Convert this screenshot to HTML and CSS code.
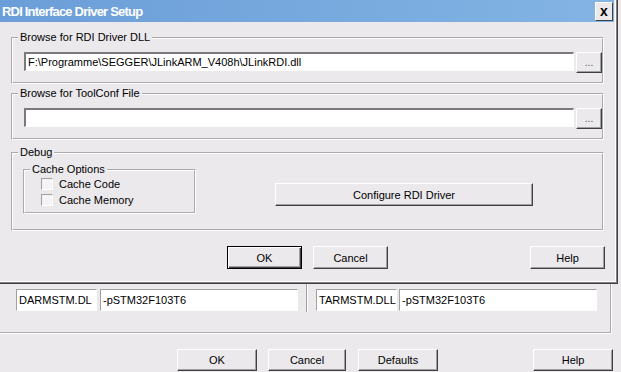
FILE: index.html
```html
<!DOCTYPE html>
<html lang="en">
<head>
    <meta charset="UTF-8">
    <title>RDI Interface Driver Setup</title>
    <link rel="stylesheet" href="styles.css">
</head>
<body>

    <div class="dialog">
        <div class="titlebar">
            <span class="title">RDI Interface Driver Setup</span>
            <span class="close">x</span>
        </div>

        <div class="dialog-body">
            <fieldset class="group group-dll">
                <legend>Browse for RDI Driver DLL</legend>
                <div class="browse-row">
                    <div class="field wide">F:\Programme\SEGGER\JLinkARM_V408h\JLinkRDI.dll</div>
                    <button class="btn browse">...</button>
                </div>
            </fieldset>

            <fieldset class="group group-conf">
                <legend>Browse for ToolConf File</legend>
                <div class="browse-row">
                    <div class="field wide"></div>
                    <button class="btn browse">...</button>
                </div>
            </fieldset>

            <fieldset class="group group-debug">
                <legend>Debug</legend>
                <div class="debug-row">
                    <fieldset class="group cache">
                        <legend>Cache Options</legend>
                        <div class="checks">
                            <label class="check"><span class="box"></span>Cache Code</label>
                            <label class="check"><span class="box"></span>Cache Memory</label>
                        </div>
                    </fieldset>
                    <button class="btn configure">Configure RDI Driver</button>
                </div>
            </fieldset>

            <div class="button-row">
                <button class="btn default">OK</button>
                <button class="btn">Cancel</button>
                <span class="spacer"></span>
                <button class="btn">Help</button>
            </div>
        </div>
    </div>

    <div class="under">
        <div class="under-frame">
            <div class="pair">
                <div class="field small">DARMSTM.DL</div>
                <div class="field long">-pSTM32F103T6</div>
            </div>
            <span class="divider"></span>
            <div class="pair right">
                <div class="field small">TARMSTM.DLL</div>
                <div class="field long">-pSTM32F103T6</div>
            </div>
        </div>
        <div class="under-buttons">
            <button class="btn ok2">OK</button>
            <button class="btn cancel2">Cancel</button>
            <button class="btn defaults">Defaults</button>
            <span class="spacer"></span>
            <button class="btn help2">Help</button>
        </div>
    </div>

</body>
</html>
```

FILE: styles.css
```css
body {
    margin: 0;
    width: 621px;
    height: 372px;
    overflow: hidden;
    background: #ece9ec;
    font-family: "Liberation Sans", Arial, sans-serif;
    font-size: 11px;
    color: #000;
}
.dialog {
    box-sizing: border-box;
    width: 618px;
    height: 284px;
    border-right: 1px solid #404040;
    border-bottom: 1px solid #404040;
    box-shadow: inset -1px -1px 0 #808080, inset -2px -2px 0 #ffffff;
    background: #ece9ec;
}
.titlebar {
    height: 22px;
    margin-right: 3px;
    display: flex;
    align-items: center;
    justify-content: space-between;
    background: linear-gradient(to right, #6b9ed8, #83b4e4);
}
.title {
    color: #fff;
    font-weight: bold;
    font-size: 13px;
    letter-spacing: -0.8px;
    padding-left: 2px;
}
.close {
    width: 16px;
    height: 17px;
    margin-right: 1px;
    display: flex;
    align-items: center;
    justify-content: center;
    background: #ece9ec;
    border: 1px solid;
    border-color: #fff #404040 #404040 #fff;
    font-size: 14px;
    line-height: 14px;
    font-weight: bold;
}
.dialog-body {
    padding: 9px 0 0 11px;
}
.group {
    margin: 0;
    padding: 0;
    border: 2px groove #fff;
    min-width: 0;
}
.group legend {
    margin-left: 5px;
    padding: 0 2px;
    line-height: 13px;
}
.group-dll, .group-conf, .group-debug {
    width: 593px;
    box-sizing: border-box;
}
.group-conf {
    margin-top: 3px;
}
.group-debug {
    margin-top: 6px;
}
.browse-row {
    display: flex;
    align-items: flex-start;
    gap: 2px;
    padding: 8px 0 9px 11px;
}
.field {
    box-sizing: border-box;
    height: 19px;
    background: #fff;
    border-style: solid;
    border-width: 2px 1px 1px 2px;
    border-color: #7a7a7a #ffffff #ffffff #7a7a7a;
    padding: 2px 0 0 2px;
    white-space: nowrap;
    overflow: hidden;
}
.field.wide {
    width: 550px;
}
.btn {
    box-sizing: border-box;
    font-family: inherit;
    font-size: 11px;
    color: #000;
    background: #ece9ec;
    border: 1px solid;
    border-color: #fff #404040 #404040 #fff;
    box-shadow: inset -1px -1px 0 #a0a0a0;
    padding: 0;
    height: 23px;
    width: 75px;
}
.browse {
    width: 26px;
    height: 21px;
    font-size: 10px;
    color: #555;
}
.debug-row {
    display: flex;
    align-items: flex-start;
    padding: 4px 0 15px 10px;
}
.cache {
    width: 173px;
    box-sizing: border-box;
}
.checks {
    padding: 0 0 4px 16px;
}
.check {
    display: flex;
    align-items: center;
    height: 16px;
}
.box {
    width: 12px;
    height: 12px;
    box-sizing: border-box;
    margin-right: 6px;
    background: #f4f4f4;
    border: 1px solid;
    border-color: #a0a0a0 #fff #fff #a0a0a0;
}
.configure {
    width: 258px;
    height: 23px;
    margin: 20px 0 0 79px;
}
.button-row {
    display: flex;
    padding: 15px 0 0 216px;
    width: 378px;
}
.button-row .btn + .btn {
    margin-left: 11px;
}
.spacer {
    flex: 1;
}
.default {
    border: 1px solid #000;
    box-shadow: inset 1px 1px 0 #fff, inset -1px -1px 0 #404040, inset -2px -2px 0 #a0a0a0;
}
.under {
    height: 88px;
}
.under-frame {
    width: 612px;
    height: 50px;
    box-sizing: border-box;
    border-right: 2px groove #fff;
    border-bottom: 2px groove #fff;
    display: flex;
    padding: 5px 0 0 16px;
}
.pair {
    display: flex;
    gap: 3px;
}
.pair.right {
    gap: 2px;
}
.divider {
    width: 0;
    height: 28px;
    margin: -5px 8px 0 8px;
    border-left: 1px solid #a0a0a0;
    border-right: 1px solid #fff;
}
.under-frame .field {
    height: 22px;
    padding-top: 4px;
    border-color: #a0a0a0 #fff #fff #a0a0a0;
    border-width: 1px;
}
.field.small {
    width: 81px;
}
.field.long {
    width: 198px;
}
.under-buttons {
    display: flex;
    padding: 15px 0 0 177px;
    width: 436px;
}
.under-buttons .btn {
    height: 22px;
    width: 80px;
}
.cancel2 {
    margin-left: 11px;
    width: 78px !important;
}
.defaults {
    margin-left: 12px;
}
```
